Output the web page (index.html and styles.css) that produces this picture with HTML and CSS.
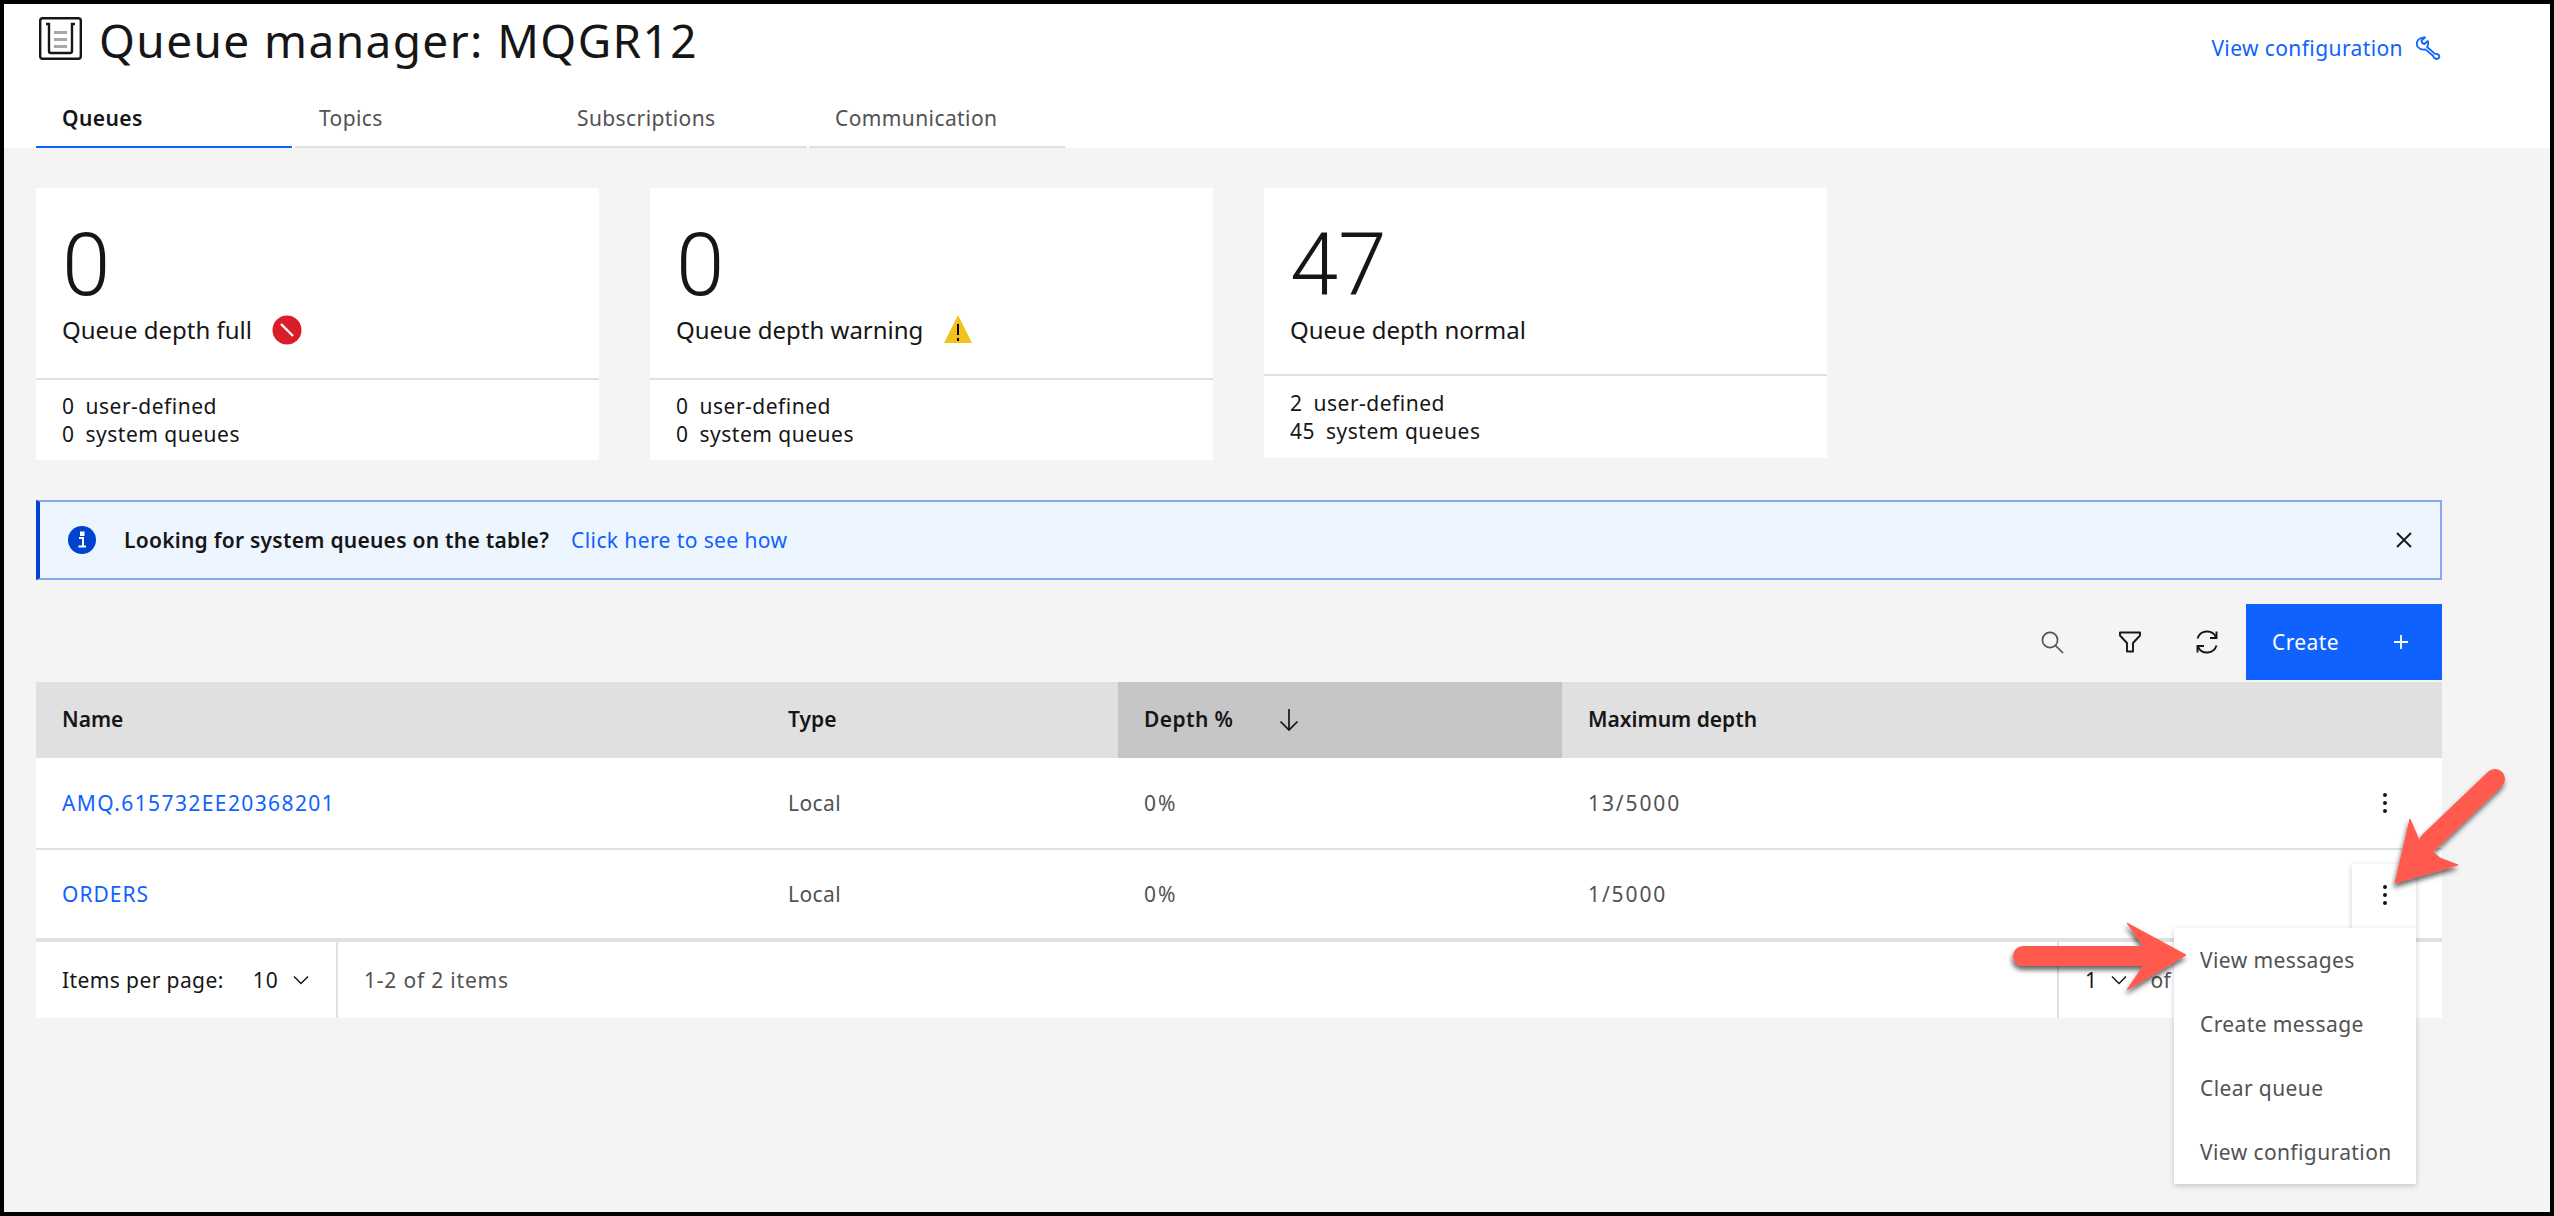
FILE: index.html
```html
<!DOCTYPE html>
<html lang="en">
<head>
<meta charset="utf-8">
<title>Queue manager: MQGR12</title>
<link rel="stylesheet" href="styles.css">
</head>
<body>
<div class="page">
  <header class="top">
    <div class="title-row">
      <div class="title-left">
        <svg class="qm-icon" viewBox="0 0 43 43" aria-hidden="true">
          <rect x="1.2" y="1.2" width="40.6" height="40.6" rx="2.5" fill="none" stroke="#161616" stroke-width="2.4"/>
          <path d="M7 7 H10 V34 Q10 36 12 36 H31 Q33 36 33 34 V7 H36" fill="none" stroke="#161616" stroke-width="2.4"/>
          <rect x="15" y="14" width="13" height="3" fill="#a8a8a8"/>
          <rect x="15" y="21" width="13" height="3" fill="#a8a8a8"/>
          <rect x="15" y="28" width="13" height="3" fill="#a8a8a8"/>
        </svg>
        <h1 class="title">Queue manager: MQGR12</h1>
      </div>
      <a class="config-link"><span>View configuration</span>
        <svg class="wrench" viewBox="0 0 26 24" aria-hidden="true">
          <path d="M10 1.5 L6.5 4.5 Q6.5 7.5 9.5 8 L12.8 5 Q14 8.6 12 11 L19.8 17.6 Q23.6 17.6 24.4 20 Q24.4 22.8 21.6 23 Q18.8 22.8 18 19.8 L10.4 13.4 Q5.4 14.2 2.8 11 Q.6 7.6 3.2 3.8 Q6 1.2 10 1.5 Z" fill="none" stroke="#0f62fe" stroke-width="1.8" stroke-linejoin="round"/>
        </svg>
      </a>
    </div>
    <nav class="tabs">
      <div class="tab tab-active">Queues</div>
      <div class="tab">Topics</div>
      <div class="tab">Subscriptions</div>
      <div class="tab">Communication</div>
    </nav>
  </header>

  <main class="content">
    <section class="cards">
      <article class="card">
        <div class="card-main">
          <div class="big">0</div>
          <div class="label"><span>Queue depth full</span>
            <svg class="status" viewBox="0 0 30 30" aria-hidden="true"><circle cx="15" cy="15" r="14.5" fill="#da1e28"/><path d="M9 9 L21 21" stroke="#fff" stroke-width="2.4"/></svg>
          </div>
        </div>
        <div class="card-sub"><div><span class="n">0</span>user-defined</div><div><span class="n">0</span>system queues</div></div>
      </article>
      <article class="card">
        <div class="card-main">
          <div class="big">0</div>
          <div class="label"><span>Queue depth warning</span>
            <svg class="status status-warn" viewBox="0 0 30 30" aria-hidden="true"><path d="M15 1 L29 29 H1 Z" fill="#f1c21b"/><path d="M15 10 V21 M15 24 V27" stroke="#000" stroke-width="2"/></svg>
          </div>
        </div>
        <div class="card-sub"><div><span class="n">0</span>user-defined</div><div><span class="n">0</span>system queues</div></div>
      </article>
      <article class="card card-short">
        <div class="card-main">
          <div class="big">47</div>
          <div class="label"><span>Queue depth normal</span></div>
        </div>
        <div class="card-sub"><div><span class="n">2</span>user-defined</div><div><span class="n">45</span>system queues</div></div>
      </article>
    </section>

    <section class="notice">
      <svg class="info" viewBox="0 0 28 28" aria-hidden="true"><circle cx="14" cy="14" r="14" fill="#0043ce"/><path d="M11 12 H15 V20 M10.5 20.5 H18 M13 6.5 H15.5 V9 H13 Z" fill="none" stroke="#fff" stroke-width="2"/></svg>
      <strong class="notice-title">Looking for system queues on the table?</strong>
      <a class="notice-link">Click here to see how</a>
      <svg class="close" viewBox="0 0 16 16" aria-hidden="true"><path d="M1 1 L15 15 M15 1 L1 15" stroke="#161616" stroke-width="1.8"/></svg>
    </section>

    <section class="toolbar">
      <svg class="tool" viewBox="0 0 24 24" aria-hidden="true"><circle cx="10" cy="10" r="7.6" fill="none" stroke="#525252" stroke-width="1.7"/><path d="M15.5 15.5 L23 23" stroke="#525252" stroke-width="1.7"/></svg>
      <svg class="tool" viewBox="0 0 24 24" aria-hidden="true"><path d="M2 2.5 H22 V5.5 L15 13 V21.5 H9 V13 L2 5.5 Z" fill="none" stroke="#161616" stroke-width="1.9" stroke-linejoin="round"/></svg>
      <svg class="tool" viewBox="0 0 24 24" aria-hidden="true"><path d="M2.5 8.5 A10 10 0 0 1 21 7 M21.5 15.5 A10 10 0 0 1 3 17" fill="none" stroke="#161616" stroke-width="1.9"/><path d="M21.5 1.5 V8 H15 M2.5 22.5 V16 H9" fill="none" stroke="#161616" stroke-width="1.9"/></svg>
      <button class="create"><span>Create</span>
        <svg class="plus" viewBox="0 0 16 16" aria-hidden="true"><path d="M8 1 V15 M1 8 H15" stroke="#fff" stroke-width="1.8"/></svg>
      </button>
    </section>

    <section class="table">
      <div class="row head">
        <div class="cell">Name</div>
        <div class="cell">Type</div>
        <div class="cell sorted"><span class="sorted-label">Depth %</span>
          <svg class="sort" viewBox="0 0 20 24" aria-hidden="true"><path d="M10 1 V22 M1.5 13.5 L10 22 L18.5 13.5" fill="none" stroke="#161616" stroke-width="1.7"/></svg>
        </div>
        <div class="cell">Maximum depth</div>
      </div>
      <div class="row body-row">
        <div class="cell link link-long">AMQ.615732EE20368201</div>
        <div class="cell muted">Local</div>
        <div class="cell muted num">0%</div>
        <div class="cell muted num grow">13/5000<span class="dots"><i></i><i></i><i></i></span></div>
      </div>
      <div class="row body-row body-row-last">
        <div class="cell link">ORDERS</div>
        <div class="cell muted">Local</div>
        <div class="cell muted num">0%</div>
        <div class="cell muted num grow">1/5000</div>
      </div>
      <div class="pager">
        <div class="pager-size"><span>Items per page:</span><span class="pager-val">10</span>
          <svg class="chev" viewBox="0 0 16 10" aria-hidden="true"><path d="M1 1.5 L8 8.5 L15 1.5" fill="none" stroke="#161616" stroke-width="1.5"/></svg>
        </div>
        <div class="pager-count">1-2 of 2 items</div>
        <div class="pager-page"><span class="pager-num">1</span>
          <svg class="chev" viewBox="0 0 16 10" aria-hidden="true"><path d="M1 1.5 L8 8.5 L15 1.5" fill="none" stroke="#161616" stroke-width="1.5"/></svg>
          <span class="pager-of">of</span>
        </div>
      </div>
    </section>
  </main>

  <div class="menu-trigger"><span class="dots"><i></i><i></i><i></i></span></div>
  <ul class="menu">
    <li>View messages</li>
    <li>Create message</li>
    <li>Clear queue</li>
    <li>View configuration</li>
  </ul>

  <svg class="arrows" viewBox="0 0 2554 1216" aria-hidden="true">
    <defs>
      <filter id="arrow-shadow" x="-20%" y="-20%" width="140%" height="140%">
        <feDropShadow dx="-1" dy="4" stdDeviation="2.5" flood-color="#000" flood-opacity="0.6"/>
      </filter>
    </defs>
    <g filter="url(#arrow-shadow)" fill="#ff5a4d" stroke="#ff5a4d">
      <path d="M2495 779 L2429 842" stroke-width="20" stroke-linecap="round" fill="none"/>
      <path d="M2395 883 L2410 819 L2419 840 L2440 858 L2458 865 Z" stroke-width="1" stroke-linejoin="round"/>
      <path d="M2023 956 H2140" stroke-width="20" stroke-linecap="round" fill="none"/>
      <path d="M2186 955 L2127 923 L2146 950 L2146 962 L2127 990 Z" stroke-width="1" stroke-linejoin="round"/>
    </g>
  </svg>
</div>
</body>
</html>
```
FILE: styles.css
```css
* { box-sizing: border-box; }
html, body { margin: 0; padding: 0; }
body { font-family: "Noto Sans", "Open Sans", sans-serif; color: #161616; letter-spacing: .4px; }
.page {
  position: relative;
  width: 2554px;
  height: 1216px;
  border: 4px solid #000;
  background: #f4f4f4;
  overflow: hidden;
}

/* header */
.top { background: #fff; height: 144px; }
.title-row {
  height: 88px;
  padding: 13px 109px 0 35px;
  display: flex;
  justify-content: space-between;
  align-items: flex-start;
}
.title-left { display: flex; align-items: flex-start; gap: 17px; }
.qm-icon { width: 43px; height: 43px; }
.title {
  margin: -7px 0 0;
  font-size: 46px;
  line-height: 60px;
  font-weight: 400;
  letter-spacing: 1.4px;
  white-space: nowrap;
}
.config-link {
  display: flex;
  align-items: center;
  gap: 12px;
  margin-top: 19px;
  color: #0f62fe;
  font-size: 21px;
  line-height: 24px;
}
.wrench { width: 26px; height: 24px; }
.tabs { display: flex; padding-left: 32px; }
.tab {
  width: 256px;
  height: 56px;
  padding: 13px 0 0 26px;
  font-size: 21px;
  line-height: 26px;
  color: #525252;
  border-bottom: 2px solid #e0e0e0;
}
.tab:nth-child(1) { margin-right: 3px; }
.tab:nth-child(2) { padding-left: 24px; }
.tab:nth-child(3) { margin-right: 2px; }
.tab-active { color: #161616; font-weight: 600; border-bottom-color: #0f62fe; }

/* cards */
.content { padding: 40px 108px 0 32px; }
.cards { display: flex; gap: 51px; }
.card { width: 563px; height: 272px; background: #fff; }
.card-short { height: 270px; }
.card-main { height: 192px; padding: 30px 26px 0; border-bottom: 2px solid #e0e0e0; letter-spacing: 0; }
.card-short .card-main { height: 188px; }
.big { font-family: Roboto, "Noto Sans", sans-serif; font-size: 87px; line-height: 94px; font-weight: 300; }
.label { display: flex; align-items: center; gap: 20px; height: 34px; margin-top: 1px; font-size: 24px; line-height: 34px; }
.status { width: 30px; height: 30px; }
.status-warn { margin-top: -3px; }
.card-sub { padding: 12px 26px 0; font-size: 21px; line-height: 28px; letter-spacing: .5px; }
.card-short .card-sub { padding-top: 13px; }
.n { margin-right: 11px; }

/* notification */
.notice {
  display: flex;
  align-items: center;
  height: 80px;
  margin-top: 40px;
  padding: 0 28px 0 28px;
  background: #edf5ff;
  border: 2px solid #8aa9ed;
  border-left: 4px solid #0043ce;
}
.info { width: 28px; height: 28px; margin-right: 28px; }
.notice-title { font-size: 21px; font-weight: 600; line-height: 28px; letter-spacing: .25px; }
.notice-link { margin-left: 22px; font-size: 21px; line-height: 28px; color: #0f62fe; }
.close { width: 16px; height: 16px; margin-left: auto; }

/* toolbar */
.toolbar { display: flex; align-items: center; justify-content: flex-end; height: 76px; margin-top: 24px; }
.tool { width: 24px; height: 24px; margin-right: 53px; }
.tool:nth-child(1) { margin-right: 54px; }
.tool:nth-child(3) { margin-right: 27px; }
.create {
  display: flex;
  align-items: center;
  justify-content: space-between;
  width: 196px;
  height: 76px;
  padding: 0 33px 0 26px;
  border: 0;
  background: #0f62fe;
  color: #fff;
  font-family: inherit;
  font-size: 21px;
  letter-spacing: .4px;
}
.plus { width: 16px; height: 16px; }

/* table */
.table { margin-top: 2px; }
.row { display: grid; grid-template-columns: 726px 356px 444px 1fr; }
.head { height: 76px; background: #e0e0e0; font-weight: 600; letter-spacing: 0; }
.head .cell { padding-bottom: 3px; }
.cell { display: flex; align-items: center; padding-left: 26px; font-size: 21px; }
.sorted { background: #c6c6c6; }
.sorted-label { letter-spacing: .4px; }
.sort { width: 20px; height: 24px; margin-left: 46px; margin-top: 3px; }
.body-row { height: 92px; background: #fff; border-bottom: 2px solid #e0e0e0; }
.body-row-last { height: 92px; border-bottom-width: 4px; }
.link { color: #0f62fe; letter-spacing: 1px; }
.link-long { letter-spacing: 1.4px; }
.muted { color: #525252; }
.num { letter-spacing: 1.9px; }
.grow { position: relative; }
.dots { display: flex; flex-direction: column; gap: 4px; }
.dots i { display: block; width: 4px; height: 4px; border-radius: 50%; background: #161616; }
.grow .dots { position: absolute; right: 55px; top: 50%; transform: translateY(-50%); }

/* pager */
.pager { display: flex; height: 76px; background: #fff; font-size: 21px; }
.pager-size { display: flex; align-items: center; width: 302px; padding-left: 26px; border-right: 2px solid #e0e0e0; }
.pager-val { margin-left: 29px; letter-spacing: 1px; }
.chev { width: 16px; height: 10px; margin-left: 14px; }
.pager-count { display: flex; align-items: center; flex: 1; padding-left: 26px; color: #525252; letter-spacing: .8px; }
.pager-page { display: flex; align-items: center; width: 385px; padding-left: 26px; border-left: 2px solid #e0e0e0; }
.pager-of { margin-left: 23px; color: #525252; white-space: nowrap; }

/* overflow menu */
.menu-trigger {
  position: absolute;
  left: 2348px;
  top: 860px;
  width: 64px;
  height: 64px;
  padding: 21px 0 0 31px;
  background: #fff;
  box-shadow: 0 2px 6px rgba(0, 0, 0, .2);
}
.menu {
  position: absolute;
  left: 2170px;
  top: 924px;
  width: 242px;
  height: 256px;
  margin: 0;
  padding: 0;
  list-style: none;
  background: #fff;
  box-shadow: 0 2px 6px rgba(0, 0, 0, .2);
}
.menu li { height: 64px; padding-left: 26px; font-size: 21px; line-height: 64px; color: #525252; white-space: nowrap; }
.arrows { position: absolute; left: -4px; top: -4px; width: 2554px; height: 1216px; pointer-events: none; }
```
